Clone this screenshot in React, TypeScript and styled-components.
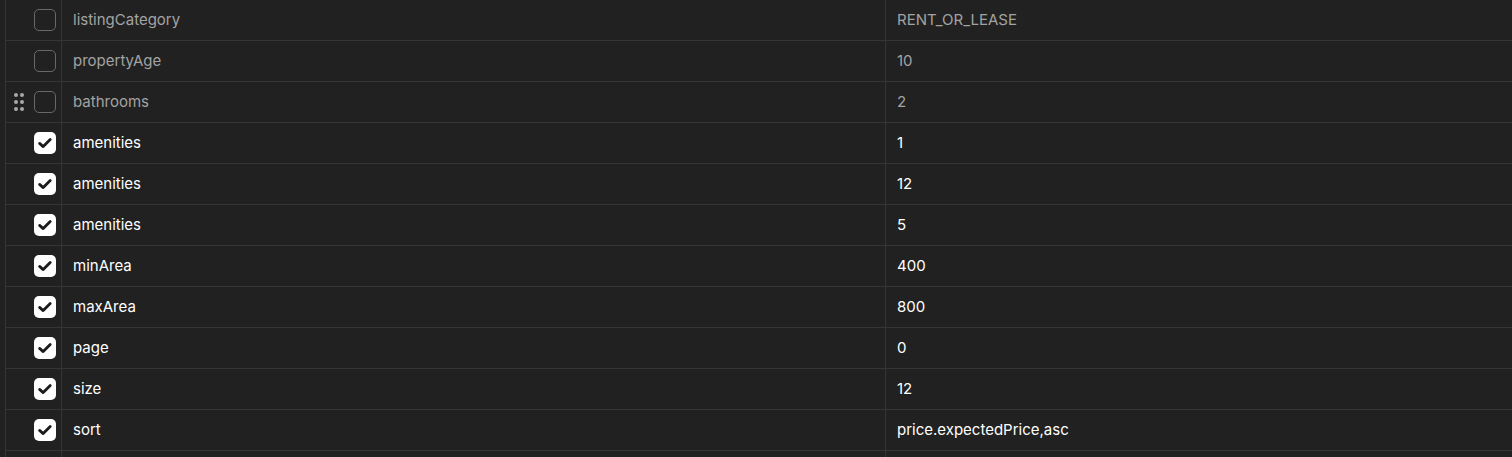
import React from "react";
import styled, { createGlobalStyle } from "styled-components";

const Global = createGlobalStyle`
  html, body { margin: 0; padding: 0; background: #212121; }
  body { font-family: Inter, "Noto Sans", sans-serif; overflow: hidden; }
`;

const Table = styled.div`
  margin-left: 5px;
  display: flex;
  flex-direction: column;
`;

const Row = styled.div`
  display: grid;
  grid-template-columns: 57px 824px 1fr;
  height: 41px;
  box-sizing: border-box;
  border-bottom: 1px solid #353535;
`;

const HandleCell = styled.div`
  position: relative;
  border-left: 1px solid #353535;
  border-right: 1px solid #353535;
  display: flex;
  align-items: center;
  padding-left: 28px;
`;

const TextCell = styled.div<{ $on: boolean; $border?: boolean }>`
  display: flex;
  align-items: center;
  padding-left: 11px;
  padding-bottom: 1px;
  font-size: 15px;
  font-weight: 400;
  color: ${(p) => (p.$on ? "#ffffff" : "#a3a3a3")};
  border-right: ${(p) => (p.$border ? "1px solid #353535" : "none")};
  white-space: nowrap;
`;

const Box = styled.div<{ $on: boolean }>`
  width: 22px;
  height: 22px;
  box-sizing: border-box;
  border-radius: 5px;
  border: ${(p) => (p.$on ? "none" : "1.5px solid #686868")};
  background: ${(p) => (p.$on ? "#ffffff" : "transparent")};
  display: flex;
  align-items: center;
  justify-content: center;
`;

const Handle = styled.div`
  position: absolute;
  left: 8px;
  top: 50%;
  transform: translateY(-50%);
  display: grid;
  grid-template-columns: 4px 4px;
  column-gap: 2px;
  row-gap: 3px;
`;

const Dot = styled.span`
  width: 4px;
  height: 4px;
  border-radius: 50%;
  background: #a8a8a8;
`;

type Item = { key: string; value: string; on: boolean; handle?: boolean };

const rows: Item[] = [
  { key: "listingCategory", value: "RENT_OR_LEASE", on: false },
  { key: "propertyAge", value: "10", on: false },
  { key: "bathrooms", value: "2", on: false, handle: true },
  { key: "amenities", value: "1", on: true },
  { key: "amenities", value: "12", on: true },
  { key: "amenities", value: "5", on: true },
  { key: "minArea", value: "400", on: true },
  { key: "maxArea", value: "800", on: true },
  { key: "page", value: "0", on: true },
  { key: "size", value: "12", on: true },
  { key: "sort", value: "price.expectedPrice,asc", on: true },
  { key: "", value: "", on: false },
];

const Check = () => (
  <svg width="16" height="16" viewBox="0 0 16 16" fill="none">
    <path d="M2.6 8.4 L6.2 11.6 L13.2 4.6" stroke="#1c1c1c" strokeWidth="2.8" strokeLinecap="round" strokeLinejoin="round" />
  </svg>
);

export default function App() {
  return (
    <>
      <Global />
      <Table>
        {rows.map((r, i) => (
          <Row key={i}>
            <HandleCell>
              {r.handle && (
                <Handle>
                  {Array.from({ length: 6 }).map((_, j) => (
                    <Dot key={j} />
                  ))}
                </Handle>
              )}
              {r.key && <Box $on={r.on}>{r.on && <Check />}</Box>}
            </HandleCell>
            <TextCell $on={r.on} $border>{r.key}</TextCell>
            <TextCell $on={r.on}>{r.value}</TextCell>
          </Row>
        ))}
      </Table>
    </>
  );
}
